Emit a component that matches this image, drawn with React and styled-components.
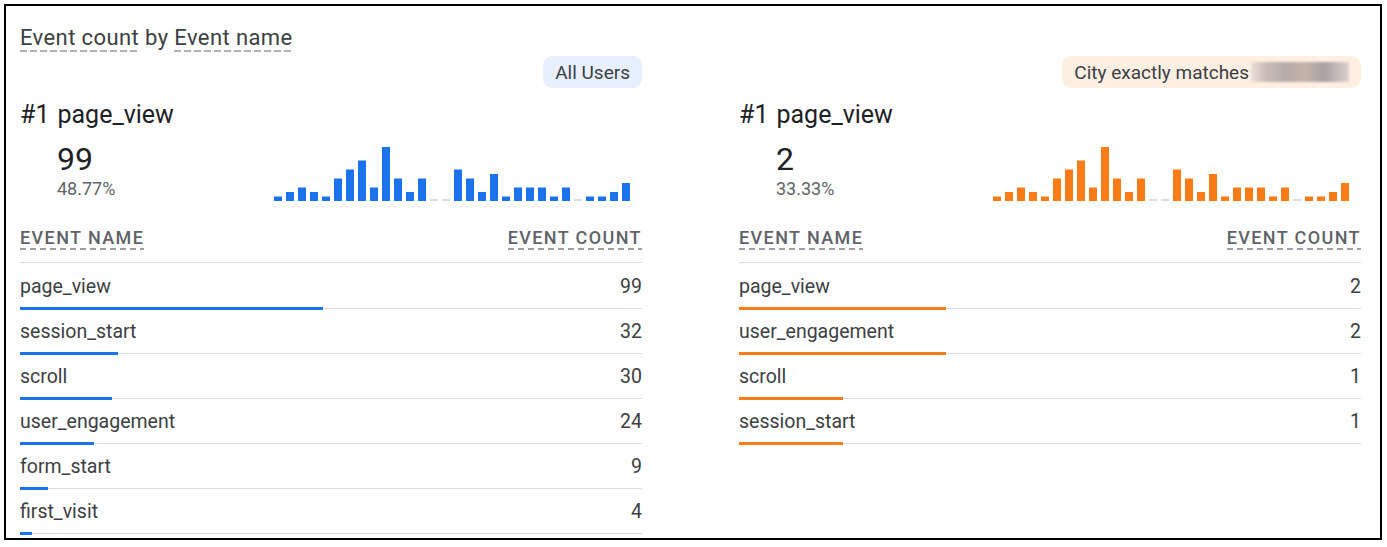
import React from "react";
import styled, { createGlobalStyle } from "styled-components";

const GlobalStyle = createGlobalStyle`
  html, body {
    margin: 0;
    padding: 0;
    background: #ffffff;
  }
  body {
    font-family: Roboto, "Liberation Sans", Arial, sans-serif;
    color: #3c4043;
  }
`;

const BLUE = "#1a73e8";
const ORANGE = "#fa7b17";

// page_view per day, 30 days
const daily = [1, 2, 3, 2, 1, 5, 7, 9, 3, 12, 5, 2, 5, 0, 0, 7, 5, 2, 6, 1, 3, 3, 3, 1, 3, 0, 1, 1, 2, 4];

const panels = [
  {
    chip: "All Users",
    chipBg: "#e8f0fe",
    color: BLUE,
    top: "page_view",
    total: 99,
    share: "48.77%",
    sum: 203,
    rows: [
      ["page_view", 99],
      ["session_start", 32],
      ["scroll", 30],
      ["user_engagement", 24],
      ["form_start", 9],
      ["first_visit", 4],
    ],
  },
  {
    chip: "City exactly matches",
    chipBg: "#feefe3",
    redacted: true,
    color: ORANGE,
    top: "page_view",
    total: 2,
    share: "33.33%",
    sum: 6,
    rows: [
      ["page_view", 2],
      ["user_engagement", 2],
      ["scroll", 1],
      ["session_start", 1],
    ],
  },
];

function Spark({ color }) {
  const unit = 4.5;
  const h = 56;
  return (
    <svg width="356" height={h} viewBox={`0 0 356 ${h}`}>
      {daily.map((v, i) =>
        v === 0 ? (
          <rect key={i} x={i * 12} y={h - 2} width="8" height="2" fill="#dadce0" />
        ) : (
          <rect key={i} x={i * 12} y={h - v * unit} width="8" height={v * unit} fill={color} />
        )
      )}
    </svg>
  );
}

function Panel({ p }) {
  return (
    <Column>
      <ChipRow>
        <Chip $bg={p.chipBg}>
          {p.chip}
          {p.redacted && <Redacted />}
        </Chip>
      </ChipRow>
      <TopLine>
        <span>#1</span>
        <span>{p.top}</span>
      </TopLine>
      <StatRow>
        <StatBlock>
          <BigNumber>{p.total}</BigNumber>
          <Percent>{p.share}</Percent>
        </StatBlock>
        <ChartBox>
          <Spark color={p.color} />
        </ChartBox>
      </StatRow>
      <HeadRow>
        <HeadLabel>Event name</HeadLabel>
        <HeadLabel>Event count</HeadLabel>
      </HeadRow>
      <TableBody>
        {p.rows.map(([name, count]) => (
          <Row key={name}>
            <RowText>
              <span>{name}</span>
              <span>{count}</span>
            </RowText>
            <Track>
              <Fill $color={p.color} style={{ width: `${(count / p.sum) * 100}%` }} />
            </Track>
          </Row>
        ))}
      </TableBody>
    </Column>
  );
}

export default function App() {
  return (
    <>
      <GlobalStyle />
      <Frame>
        <Title>
          <Dashed>Event count</Dashed> by <Dashed>Event name</Dashed>
        </Title>
        <Panels>
          {panels.map((p) => (
            <Panel key={p.chip} p={p} />
          ))}
        </Panels>
      </Frame>
    </>
  );
}

const Frame = styled.div`
  box-sizing: border-box;
  margin: 4px;
  width: 1378px;
  height: 536px;
  border: 2px solid #000;
  overflow: hidden;
  padding: 19px 19px 0 14px;
`;

const Title = styled.div`
  font-size: 22px;
  line-height: 26px;
  color: #3c4043;
  letter-spacing: 0.4px;
`;

const Dashed = styled.span`
  display: inline-block;
  padding-bottom: 1px;
  background-image: linear-gradient(to right, #aeb3b8 70%, transparent 0);
  background-size: 10px 2px;
  background-repeat: repeat-x;
  background-position: 0 100%;
`;

const Panels = styled.div`
  display: grid;
  grid-template-columns: 622px 622px;
  column-gap: 97px;
`;

const Column = styled.div`
  display: flex;
  flex-direction: column;
`;

const ChipRow = styled.div`
  display: flex;
  justify-content: flex-end;
  margin-top: 4px;
`;

const Chip = styled.div`
  display: flex;
  align-items: center;
  height: 32px;
  padding: 0 12px;
  border-radius: 9px;
  background: ${(p) => p.$bg};
  font-size: 19px;
  color: #3c4043;
`;

const Redacted = styled.span`
  display: inline-block;
  width: 98px;
  height: 20px;
  margin-left: 2px;
  background: linear-gradient(
    to right,
    #ebdfd7 0%,
    #c9bdb6 15%,
    #b5aca8 35%,
    #c3b3a9 55%,
    #a9a2a2 75%,
    #dcd2cc 100%
  );
  filter: blur(1px);
`;

const TopLine = styled.div`
  display: flex;
  gap: 8px;
  margin-top: 12px;
  font-size: 25px;
  line-height: 30px;
  color: #202124;
`;

const StatRow = styled.div`
  display: flex;
  justify-content: space-between;
  align-items: flex-end;
  margin-top: 10px;
`;

const StatBlock = styled.div`
  display: flex;
  flex-direction: column;
  padding-left: 37px;
`;

const BigNumber = styled.div`
  font-size: 32px;
  line-height: 38px;
  color: #202124;
`;

const Percent = styled.div`
  font-size: 18px;
  line-height: 22px;
  color: #5f6368;
`;

const ChartBox = styled.div`
  display: flex;
  margin-right: 12px;
  margin-bottom: -1px;
`;

const HeadRow = styled.div`
  display: flex;
  justify-content: space-between;
  align-items: flex-end;
  margin-top: 27px;
  padding-bottom: 12px;
  border-bottom: 1px solid #dadce0;
`;

const HeadLabel = styled.span`
  display: inline-block;
  font-size: 18px;
  line-height: 22px;
  font-weight: 500;
  letter-spacing: 1.4px;
  text-transform: uppercase;
  color: #5f6368;
  padding-bottom: 1px;
  background-image: linear-gradient(to right, #9aa0a6 65%, transparent 0);
  background-size: 10px 2px;
  background-repeat: repeat-x;
  background-position: 0 100%;
`;

const TableBody = styled.div`
  display: flex;
  flex-direction: column;
  padding-top: 2px;
`;

const Row = styled.div`
  display: flex;
  flex-direction: column;
  padding-top: 10px;
`;

const RowText = styled.div`
  display: flex;
  justify-content: space-between;
  font-size: 19.5px;
  line-height: 24px;
  color: #3c4043;
`;

const Track = styled.div`
  height: 3px;
  margin-top: 8px;
  display: flex;
  background: linear-gradient(#dadce0, #dadce0) 0 50% / 100% 1px no-repeat;
`;

const Fill = styled.div`
  height: 3px;
  background: ${(p) => p.$color};
`;
